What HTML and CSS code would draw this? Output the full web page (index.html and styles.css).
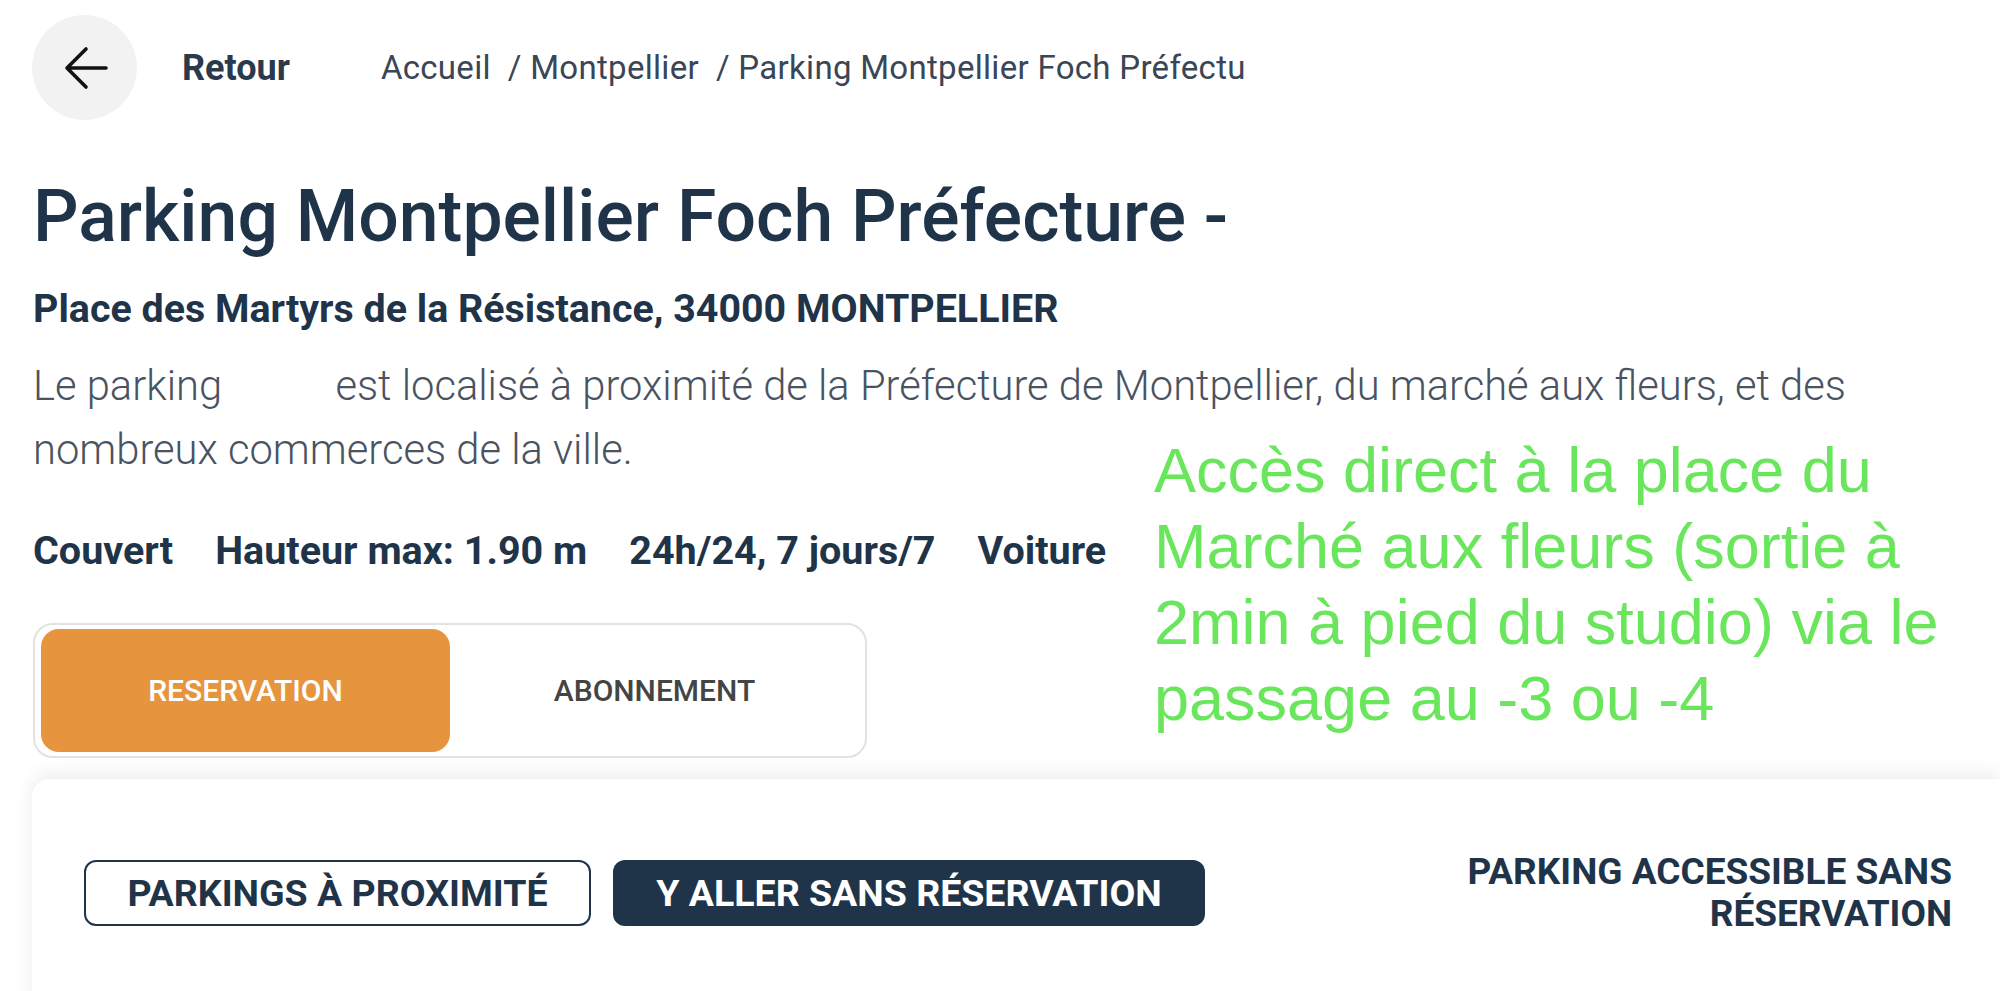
FILE: index.html
```html
<!DOCTYPE html>
<html lang="fr">
<head>
<meta charset="utf-8">
<title>Parking Montpellier Foch Préfecture</title>
<link rel="stylesheet" href="styles.css">
</head>
<body>
<div class="page">
  <header class="header">
    <div class="back">
      <svg class="back-icon" width="44" height="44" viewBox="0 0 44 44" aria-hidden="true">
        <path d="M42 22H3M22 3L3 22L22 41" fill="none" stroke="#111" stroke-width="3.6" stroke-linecap="round" stroke-linejoin="round"/>
      </svg>
    </div>
    <div class="retour">Retour</div>
    <nav class="crumbs"><span>Accueil</span><span class="sep">/ Montpellier</span><span class="sep">/ Parking Montpellier Foch Préfecture -</span></nav>
  </header>

  <h1 class="title">Parking Montpellier Foch Préfecture -</h1>
  <div class="address">Place des Martyrs de la Résistance, 34000 MONTPELLIER</div>
  <p class="desc">Le parking <span class="redacted"></span> est localisé à proximité de la Préfecture de Montpellier, du marché aux fleurs, et des<br>nombreux commerces de la ville.</p>

  <div class="features">
    <span>Couvert</span>
    <span>Hauteur max: 1.90 m</span>
    <span>24h/24, 7 jours/7</span>
    <span>Voiture</span>
  </div>

  <div class="tabs">
    <div class="tab active">RESERVATION</div>
    <div class="tab">ABONNEMENT</div>
  </div>

  <section class="card">
    <div class="actions">
      <div class="btn btn-outline">PARKINGS À PROXIMITÉ</div>
      <div class="btn btn-fill">Y ALLER SANS RÉSERVATION</div>
    </div>
    <div class="notice">PARKING ACCESSIBLE SANS<br>RÉSERVATION</div>
  </section>
</div>

<div class="note">Accès direct à la place du<br>Marché aux fleurs (sortie à<br>2min à pied du studio) via le<br>passage au -3 ou -4</div>
</body>
</html>
```

FILE: styles.css
```css
html, body {
  margin: 0;
  padding: 0;
}

body {
  width: 2000px;
  height: 991px;
  overflow: hidden;
  position: relative;
  background: #ffffff;
  font-family: Roboto, "Liberation Sans", sans-serif;
  color: #1f3449;
}

.page {
  padding: 15px 0 0 33px;
}

/* header */
.header {
  display: flex;
  align-items: center;
  height: 105px;
}

.back {
  flex: none;
  width: 105px;
  height: 105px;
  margin-left: -1px;
  border-radius: 50%;
  background: #f2f2f2;
  display: flex;
  align-items: center;
  justify-content: center;
}

.back-icon {
  margin-left: 3px;
}

.retour {
  margin-left: 45px;
  font-size: 36px;
  font-weight: 700;
  color: #2a3a4c;
}

.crumbs {
  margin-left: 91px;
  width: 863px;
  overflow: hidden;
  white-space: nowrap;
  font-size: 33px;
  letter-spacing: 0.3px;
  color: #3a4655;
}

.crumbs .sep {
  margin-left: 17px;
}

/* heading block */
.title {
  margin: 54px 0 0;
  font-size: 71.5px;
  line-height: 86px;
  font-weight: 500;
  color: #1f3449;
}

.address {
  margin-top: 25px;
  font-size: 39.4px;
  line-height: 48px;
  font-weight: 700;
  color: #1f3449;
}

.desc {
  margin: 21px 0 0;
  font-size: 41.7px;
  line-height: 64px;
  font-weight: 300;
  color: #4a5361;
}

.redacted {
  display: inline-block;
  width: 93px;
}

.features {
  margin-top: 45px;
  display: flex;
  gap: 42px;
  font-size: 39.5px;
  line-height: 48px;
  font-weight: 700;
  color: #1f3449;
}

/* tabs */
.tabs {
  margin-top: 48px;
  box-sizing: border-box;
  width: 834px;
  height: 135px;
  border: 2px solid #e2e2e2;
  border-radius: 20px;
  padding: 4px 6px;
  display: grid;
  grid-template-columns: 1fr 1fr;
}

.tab {
  display: flex;
  align-items: center;
  justify-content: center;
  border-radius: 18px;
  font-size: 30px;
  font-weight: 500;
  color: #444444;
}

.tab.active {
  background: #e6953e;
  color: #ffffff;
}

/* bottom card */
.card {
  margin: 21px 0 0 -1px;
  height: 240px;
  box-sizing: border-box;
  padding: 72px 48px 0 52px;
  background: #ffffff;
  border-radius: 18px 0 0 0;
  box-shadow: 0 -6px 18px rgba(0, 0, 0, 0.07);
  display: flex;
  align-items: flex-start;
  justify-content: space-between;
}

.actions {
  display: flex;
  gap: 22px;
  margin-top: 9px;
}

.btn {
  box-sizing: border-box;
  height: 66px;
  border-radius: 12px;
  display: flex;
  align-items: center;
  justify-content: center;
  font-size: 37.5px;
  font-weight: 700;
  white-space: nowrap;
}

.btn-outline {
  width: 507px;
  border: 2px solid #1f3449;
  color: #1f3449;
  background: #ffffff;
}

.btn-fill {
  width: 592px;
  background: #1f3449;
  color: #ffffff;
}

.notice {
  text-align: right;
  font-size: 37px;
  line-height: 42px;
  font-weight: 700;
  color: #1f3449;
}

/* annotation overlay */
.note {
  position: absolute;
  left: 1154px;
  top: 432px;
  font-family: "Liberation Sans", Arial, sans-serif;
  font-size: 63px;
  line-height: 76px;
  color: #6ae65c;
  white-space: nowrap;
}
```
